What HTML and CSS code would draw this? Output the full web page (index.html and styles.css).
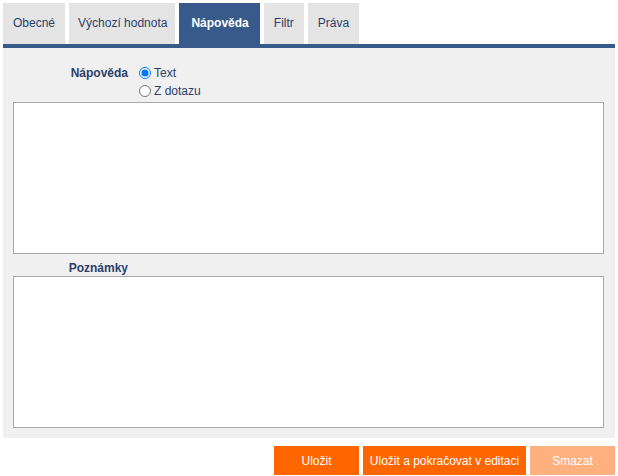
FILE: index.html
```html
<!DOCTYPE html>
<html lang="cs">
<head>
    <meta charset="UTF-8">
    <title>Nápověda</title>
    <link rel="stylesheet" href="styles.css">
</head>
<body>
    <div class="page">
        <div class="tabs">
            <div class="tab">Obecné</div>
            <div class="tab">Výchozí hodnota</div>
            <div class="tab active">Nápověda</div>
            <div class="tab">Filtr</div>
            <div class="tab">Práva</div>
        </div>

        <div class="panel">
            <div class="row">
                <div class="label">Nápověda</div>
                <div class="radios">
                    <label><input type="radio" name="src" checked> Text</label>
                    <label><input type="radio" name="src"> Z dotazu</label>
                </div>
            </div>
            <textarea class="area"></textarea>

            <div class="row note">
                <div class="label">Poznámky</div>
            </div>
            <textarea class="area"></textarea>
        </div>

        <div class="buttons">
            <button class="btn w85">Uložit</button>
            <button class="btn w163">Uložit a pokračovat v editaci</button>
            <button class="btn w85 disabled">Smazat</button>
        </div>
    </div>
</body>
</html>
```

FILE: styles.css
```css
body {
    margin: 0;
    font-family: 'Liberation Sans', Arial, sans-serif;
    font-size: 12px;
    color: #2b3f6b;
    background: #fff;
}

.page {
    padding: 3px 3px 0 3px;
    width: 612px;
}

.tabs {
    display: flex;
    gap: 4px;
}

.tab {
    height: 41px;
    line-height: 41px;
    padding: 0 10px;
    background-color: #e4e4e4;
    color: #2b3f6b;
}

.tab:nth-child(2) {
    padding: 0 8px 0 9px;
}

.tab.active {
    background-color: #385a8a;
    color: #fff;
    font-weight: bold;
    padding: 0 11px 0 12px;
}

.panel {
    border-top: 4px solid #385a8a;
    background-color: #f0f0f0;
    padding: 16px 11px 10px 10px;
}

.row {
    display: flex;
}

.label {
    width: 115px;
    text-align: right;
    font-weight: bold;
    padding-top: 2px;
}

.radios {
    display: flex;
    flex-direction: column;
    margin-left: 10px;
}

.radios label {
    display: flex;
    align-items: center;
    height: 18px;
}

.radios input {
    margin: 0 3px 0 1px;
    width: 12px;
    height: 12px;
}

.area {
    display: block;
    box-sizing: border-box;
    width: 591px;
    height: 152px;
    margin: 0;
    border: 1px solid #a9a9a9;
    background: #fff;
    resize: none;
    margin-top: 2px;
}

.note {
    height: 19px;
    margin-top: 1px;
}

.note .label {
    padding-top: 6px;
}

.buttons {
    display: flex;
    justify-content: flex-end;
    gap: 4px;
    margin-top: 8px;
}

.btn {
    height: 29px;
    border: none;
    padding: 0;
    background-color: #ff6600;
    color: #fff;
    font-family: inherit;
    font-size: 12px;
}

.w85 {
    width: 85px;
}

.w163 {
    width: 163px;
}

.btn.disabled {
    background-color: #ffb07f;
}
```
